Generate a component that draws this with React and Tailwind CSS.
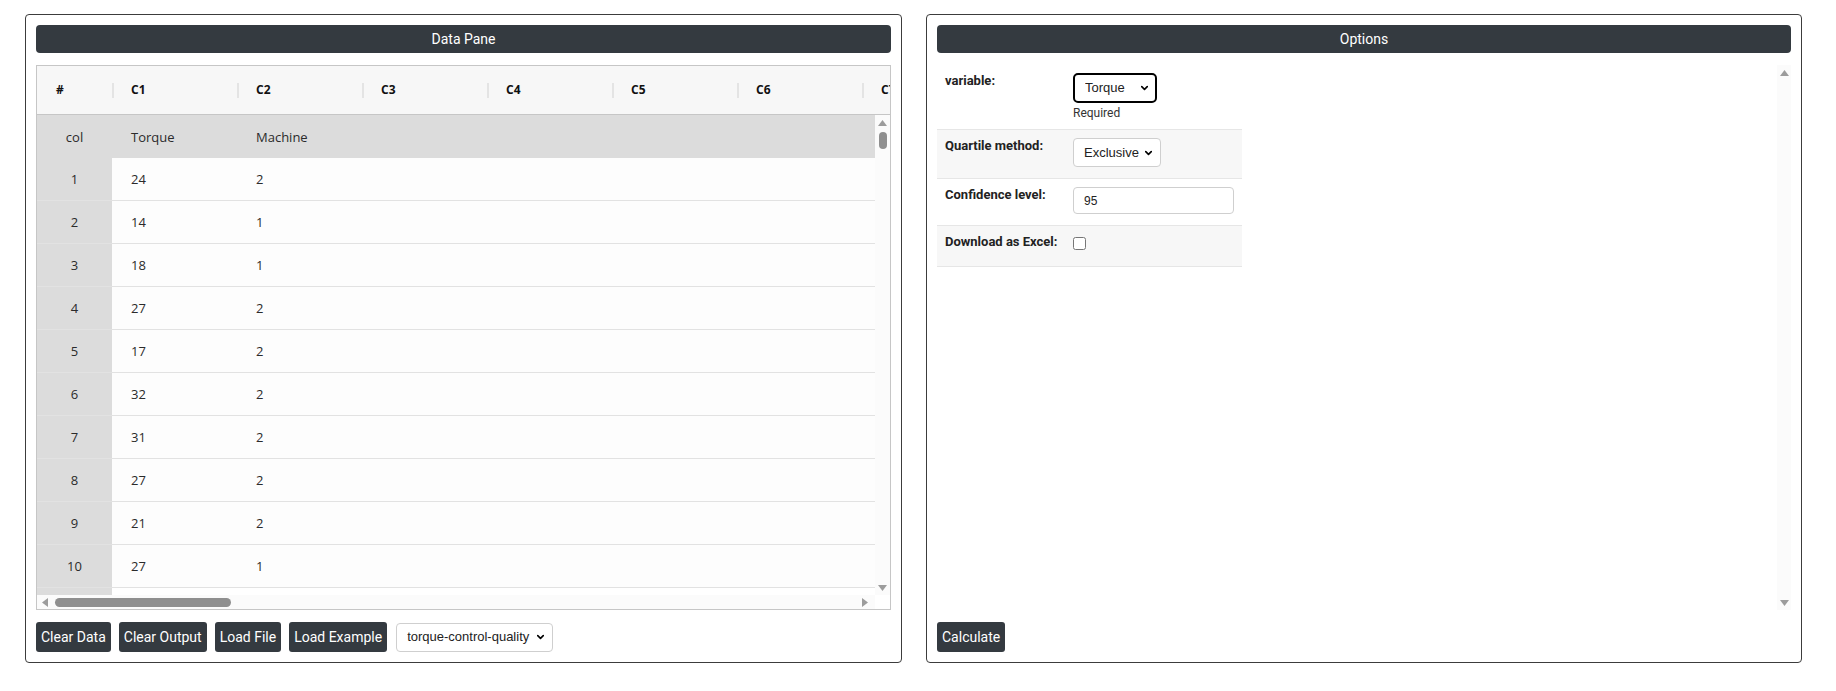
import { ChevronDown } from 'lucide-react';

const dataRows = [
  [24, 2], [14, 1], [18, 1], [27, 2], [17, 2],
  [32, 2], [31, 2], [27, 2], [21, 2], [27, 1],
];

const columns = ['C1', 'C2', 'C3', 'C4', 'C5', 'C6', 'C7'];

// little gray triangles for the scrollbar ends
function Arrow({ dir, className = '' }) {
  const vertical = dir === 'up' || dir === 'down';
  const w = vertical ? 9 : 6;
  const h = vertical ? 6 : 9;
  const points = {
    up: '0,6 4.5,0 9,6',
    down: '0,0 9,0 4.5,6',
    left: '6,0 6,9 0,4.5',
    right: '0,0 6,4.5 0,9',
  }[dir];
  return (
    <svg width={w} height={h} viewBox={`0 0 ${w} ${h}`} className={className}>
      <polygon points={points} fill="#9c9c9c" />
    </svg>
  );
}

function PaneTitle({ children }) {
  return (
    <div className="h-[28px] shrink-0 rounded-[4px] bg-[#343a40] text-white text-[14px] font-['Roboto',sans-serif] flex items-center justify-center">
      {children}
    </div>
  );
}

function DarkButton({ children }) {
  return (
    <button className="h-[30px] shrink-0 px-[5px] rounded-[3px] bg-[#343a40] text-white text-[14px] font-['Roboto',sans-serif]">
      {children}
    </button>
  );
}

function Select({ value, options, className = '', boxClass = '' }) {
  return (
    <div className={`relative shrink-0 ${className}`}>
      <select
        defaultValue={value}
        className={`appearance-none w-full h-full bg-white pl-[10px] pr-[20px] text-[13px] text-[#222] font-['Liberation_Sans',Arial,sans-serif] outline-none ${boxClass}`}
      >
        {options.map((o) => (
          <option key={o}>{o}</option>
        ))}
      </select>
      <ChevronDown
        size={11}
        strokeWidth={3.5}
        className="absolute right-[7px] top-1/2 -translate-y-1/2 pointer-events-none text-black"
      />
    </div>
  );
}

function DataTable() {
  return (
    <div className="h-[545px] shrink-0 border border-[#c6c6c6] flex flex-col font-['Open_Sans',sans-serif] text-[#2b2b2b] overflow-hidden">
      {/* column header */}
      <div className="h-[49px] shrink-0 flex items-center bg-[#f7f7f7] border-b border-[#c6c6c6] text-[12px] font-bold text-[#111] overflow-hidden">
        <div className="w-[75px] shrink-0 pl-[19px]">#</div>
        {columns.map((c) => (
          <div key={c} className="w-[125px] shrink-0 flex items-center">
            <div className="w-[2px] h-[15px] bg-[#e4e4e4]" />
            <span className="ml-[17px]">{c}</span>
          </div>
        ))}
      </div>

      {/* body with vertical scrollbar */}
      <div className="h-[480px] shrink-0 flex">
        <div className="flex-1 overflow-hidden text-[13px]">
          <div className="h-[43px] flex items-center pt-[2px] bg-[#dcdcdc]">
            <div className="w-[75px] shrink-0 text-center">col</div>
            <div className="w-[125px] shrink-0 pl-[19px]">Torque</div>
            <div className="w-[125px] shrink-0 pl-[19px]">Machine</div>
          </div>
          {dataRows.map((r, i) => (
            <div key={i} className="h-[43px] flex border-b border-[#e2e2e2] bg-[#fdfdfd]">
              <div className="w-[75px] shrink-0 bg-[#dcdcdc] pt-[2px] flex items-center justify-center">{i + 1}</div>
              <div className="w-[125px] shrink-0 pl-[19px] pt-[2px] flex items-center">{r[0]}</div>
              <div className="w-[125px] shrink-0 pl-[19px] pt-[2px] flex items-center">{r[1]}</div>
            </div>
          ))}
          <div className="h-[43px] flex">
            <div className="w-[75px] shrink-0 bg-[#dcdcdc]" />
          </div>
        </div>
        <div className="w-[15px] shrink-0 bg-[#fbfbfb] flex flex-col items-center">
          <Arrow dir="up" className="mt-[5px]" />
          <div className="mt-[6px] w-[8px] h-[17px] rounded-full bg-[#8f8f8f]" />
          <Arrow dir="down" className="mt-auto mb-[4px]" />
        </div>
      </div>

      {/* horizontal scrollbar */}
      <div className="h-[14px] shrink-0 flex">
        <div className="flex-1 flex items-center bg-[#fbfbfb]">
          <Arrow dir="left" className="ml-[5px]" />
          <div className="ml-[7px] w-[176px] h-[9px] rounded-full bg-[#8f8f8f]" />
          <Arrow dir="right" className="ml-auto mr-[7px]" />
        </div>
        <div className="w-[15px] shrink-0" />
      </div>
    </div>
  );
}

function OptionRow({ label, className = '', children }) {
  return (
    <div className={`flex items-start pt-[8px] pl-[8px] border-b border-[#e6e6e6] ${className}`}>
      <div className="w-[128px] shrink-0 text-[13px] leading-[15px] font-bold text-[#222] font-['Roboto',sans-serif]">
        {label}
      </div>
      <div className="flex flex-col">{children}</div>
    </div>
  );
}

export default function App() {
  return (
    <div className="min-h-screen bg-white">
      <div className="flex gap-[24px] pl-[25px] pt-[14px]">
        {/* Data pane */}
        <section className="w-[877px] shrink-0 border border-[#3c3c3c] rounded-[4px] p-[10px] flex flex-col gap-[12px]">
          <PaneTitle>Data Pane</PaneTitle>
          <DataTable />
          <div className="flex items-center gap-[8px]">
            <DarkButton>Clear Data</DarkButton>
            <DarkButton>Clear Output</DarkButton>
            <DarkButton>Load File</DarkButton>
            <DarkButton>Load Example</DarkButton>
            <Select
              value="torque-control-quality"
              options={['torque-control-quality']}
              className="w-[157px] h-[29px] ml-[1px]"
              boxClass="border border-[#cfcfcf] rounded-[4px]"
            />
          </div>
        </section>

        {/* Options pane */}
        <section className="w-[876px] shrink-0 border border-[#3c3c3c] rounded-[4px] p-[10px] flex flex-col gap-[12px]">
          <PaneTitle>Options</PaneTitle>
          <div className="h-[545px] shrink-0 flex">
            <div className="w-[305px] shrink-0 flex flex-col">
              <OptionRow label="variable:" className="h-[65px] bg-white">
                <Select
                  value="Torque"
                  options={['Torque', 'Machine']}
                  className="w-[84px] h-[30px]"
                  boxClass="border-2 border-black rounded-[5px]"
                />
                <span className="mt-[2px] text-[12px] leading-[16px] text-[#333] font-['Roboto',sans-serif]">Required</span>
              </OptionRow>
              <OptionRow label="Quartile method:" className="h-[49px] bg-[#f7f7f7]">
                <Select
                  value="Exclusive"
                  options={['Exclusive', 'Inclusive']}
                  className="w-[88px] h-[29px]"
                  boxClass="border border-[#cfcfcf] rounded-[4px]"
                />
              </OptionRow>
              <OptionRow label="Confidence level:" className="h-[47px] bg-white">
                <input
                  defaultValue="95"
                  className="w-[161px] h-[27px] bg-white border border-[#cfcfcf] rounded-[4px] pl-[10px] text-[12px] text-[#222] font-['Liberation_Sans',Arial,sans-serif] outline-none"
                />
              </OptionRow>
              <OptionRow label="Download as Excel:" className="h-[41px] bg-[#f7f7f7]">
                <input type="checkbox" className="m-0 mt-[3px] w-[13px] h-[13px]" />
              </OptionRow>
            </div>
            <div className="flex-1" />
            <div className="w-[14px] shrink-0 bg-[#fbfbfb] flex flex-col items-center">
              <Arrow dir="up" className="mt-[5px]" />
              <Arrow dir="down" className="mt-auto mb-[4px]" />
            </div>
          </div>
          <div className="flex items-center">
            <DarkButton>Calculate</DarkButton>
          </div>
        </section>
      </div>
    </div>
  );
}
